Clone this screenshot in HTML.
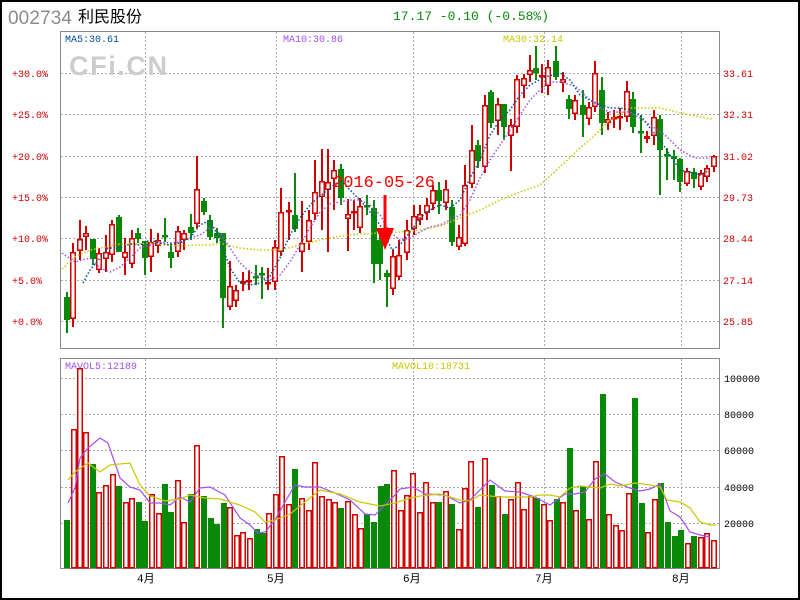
<!DOCTYPE html>
<html><head><meta charset="utf-8">
<style>
html,body{margin:0;padding:0;background:#fff;}
#wrap{position:relative;width:800px;height:600px;overflow:hidden;}
svg{position:absolute;left:0;top:0;}
text{font-family:"Liberation Mono",monospace;}
</style></head>
<body><div id="wrap">
<svg id="s" width="800" height="600" viewBox="0 0 800 600" xmlns="http://www.w3.org/2000/svg">
<rect x="1" y="1" width="798" height="598" fill="#fff" stroke="#000" stroke-width="2"/>
<text x="8" y="24" style="font-family:'Liberation Sans',sans-serif" font-size="19" fill="#8c8c8c" textLength="64">002734</text>
<text x="78" y="22" style="font-family:'Liberation Sans','Noto Sans CJK SC',sans-serif" font-size="16" fill="#000">利民股份</text>
<text x="393" y="20" font-size="13" fill="#0a8a0a">17.17 -0.10 (-0.58%)</text>
<g id="grid" stroke="#aaa" stroke-width="1" stroke-dasharray="2,2"></g>
<rect x="60.5" y="31.5" width="659" height="317" fill="none" stroke="#888"/>
<rect x="60.5" y="358.5" width="659" height="210" fill="none" stroke="#888"/>
<text x="65" y="42" font-size="10" fill="#004f9f">MA5:30.61</text>
<text x="283" y="42" font-size="10" fill="#a050f0">MA10:30.86</text>
<text x="503" y="42" font-size="10" fill="#c8c800">MA30:32.14</text>
<text x="69" y="75" style="font-family:'Liberation Sans',sans-serif" font-size="27" font-weight="bold" fill="#cccccc" textLength="98">CFi.CN</text>
<text x="65" y="369" font-size="10" fill="#a050f0">MAVOL5:12189</text>
<text x="392" y="369" font-size="10" fill="#c8c800">MAVOL10:18731</text>
<g id="lab" font-size="10" fill="#d00000"></g>
<g id="vol"></g>
<g id="cdl"></g>
<g id="lines" fill="none"></g>
<text x="333" y="187" font-size="17" fill="#ff0000" textLength="102">2016-05-26</text>
<line x1="385" y1="195" x2="385" y2="236" stroke="#ff0000" stroke-width="3"/>
<polygon points="376,228 394,228 385,250" fill="#ff0000"/>
<g font-size="11" fill="#000" style="font-family:'Liberation Sans','Noto Sans CJK SC',sans-serif">
<text x="137" y="582">4月</text><text x="267" y="582">5月</text><text x="403" y="582">6月</text><text x="535" y="582">7月</text><text x="672" y="582">8月</text>
</g>
</svg>
<script>
var NS="http://www.w3.org/2000/svg";
function el(p,t,a){var e=document.createElementNS(NS,t);for(var k in a)e.setAttribute(k,a[k]);document.getElementById(p).appendChild(e);return e;}
[73,114,156,197,238,280,321].forEach(function(y){el('grid','line',{x1:61,x2:719,y1:y+.5,y2:y+.5});});
[378,414,450,487,523].forEach(function(y){el('grid','line',{x1:61,x2:719,y1:y+.5,y2:y+.5});});
[145,276,413,544,681].forEach(function(x){el('grid','line',{x1:x+.5,x2:x+.5,y1:32,y2:348});el('grid','line',{x1:x+.5,x2:x+.5,y1:359,y2:568});});
var L=[["+30.0%",73],["+25.0%",114],["+20.0%",156],["+15.0%",197],["+10.0%",238],["+5.0%",280],["+0.0%",321]];
L.forEach(function(a){var t=el('lab','text',{x:12,y:a[1]+4});t.textContent=a[0];});
var R=[["33.61",73],["32.31",114],["31.02",156],["29.73",197],["28.44",238],["27.14",280],["25.85",321]];
R.forEach(function(a){var t=el('lab','text',{x:723,y:a[1]+4});t.textContent=a[0];});
var V=[["100000",378],["80000",414],["60000",450],["40000",487],["20000",523]];
V.forEach(function(a){var t=el('lab','text',{x:724,y:a[1]+4,fill:"#000"});t.textContent=a[0];});
var vb=[[67,520,'g'],[74,429,'r'],[80,368,'r'],[86,432,'r'],[93,464,'g'],[99,492,'r'],[106,485,'r'],[113,474,'r'],[119,486,'g'],[126,502,'r'],[132,498,'r'],[139,502,'g'],[145,521,'g'],[152,494,'r'],[159,513,'r'],[165,484,'g'],[171,512,'g'],[178,480,'r'],[184,522,'r'],[191,494,'g'],[197,445,'r'],[204,496,'g'],[211,518,'g'],[217,524,'g'],[224,503,'g'],[230,507,'r'],[237,535,'r'],[243,532,'r'],[250,538,'r'],[257,529,'g'],[263,533,'g'],[269,513,'r'],[276,494,'r'],[282,456,'r'],[289,504,'r'],[295,469,'g'],[302,498,'r'],[309,510,'r'],[315,462,'r'],[322,496,'r'],[329,499,'r'],[335,502,'r'],[341,508,'g'],[348,501,'r'],[355,514,'r'],[361,528,'r'],[367,514,'g'],[374,522,'g'],[381,486,'g'],[387,484,'g'],[394,470,'r'],[401,510,'r'],[407,495,'r'],[413,473,'r'],[420,512,'r'],[426,482,'r'],[433,502,'r'],[439,502,'g'],[446,491,'r'],[452,504,'g'],[459,529,'r'],[465,488,'r'],[471,461,'r'],[478,507,'g'],[485,458,'r'],[492,485,'g'],[498,496,'r'],[505,514,'g'],[511,499,'r'],[518,482,'r'],[524,509,'r'],[531,496,'r'],[537,498,'g'],[544,504,'r'],[550,520,'r'],[557,499,'g'],[563,502,'r'],[570,448,'g'],[576,510,'r'],[583,486,'g'],[589,519,'r'],[596,461,'r'],[603,394,'g'],[609,514,'r'],[616,525,'r'],[622,530,'r'],[629,493,'r'],[635,398,'g'],[642,503,'g'],[648,532,'r'],[655,499,'r'],[661,483,'g'],[668,522,'g'],[675,536,'g'],[681,530,'g'],[688,543,'r'],[694,536,'g'],[701,537,'r'],[707,533,'r'],[714,540,'r']];
vb.forEach(function(b){
 if(b[2]=='g') el('vol','rect',{x:b[0]-3,y:b[1],width:6,height:568-b[1],fill:'#088a08'});
 else el('vol','rect',{x:b[0]-2.25,y:b[1]+.75,width:4.5,height:567-b[1],fill:'#fff',stroke:'#d00000','stroke-width':1.5});
});
var cd=[[67,297,320,292,333,'g'],[73,252,319,243,327,'r'],[80,239,251,220,260,'r'],[86,233,237,226,250,'r'],[93,239,259,239,265,'g'],[99,253,270,248,273,'r'],[106,252,259,235,272,'r'],[112,224,255,220,262,'r'],[119,217,252,215,252,'g'],[125,252,258,238,275,'r'],[132,238,264,230,268,'r'],[138,233,239,228,243,'g'],[145,241,258,241,275,'g'],[151,242,257,229,272,'r'],[158,240,246,233,253,'r'],[165,235,237,218,242,'g'],[171,252,258,243,268,'g'],[178,231,252,226,257,'r'],[184,233,240,230,250,'r'],[191,227,233,214,240,'g'],[197,189,224,156,228,'r'],[204,201,212,198,215,'g'],[210,220,237,215,240,'g'],[217,233,238,228,243,'g'],[223,233,298,233,328,'g'],[230,286,307,261,310,'r'],[236,290,301,285,307,'r'],[243,281,283,272,291,'r'],[249,280,282,270,290,'r'],[256,276,278,265,285,'g'],[262,273,275,267,299,'g'],[268,282,284,268,290,'r'],[275,247,282,240,290,'r'],[281,212,252,188,256,'r'],[289,210,212,202,240,'r'],[295,215,229,173,232,'g'],[302,243,252,201,272,'r'],[309,220,242,210,250,'r'],[315,192,214,160,220,'r'],[322,181,197,149,230,'r'],[328,182,190,149,252,'r'],[334,170,179,160,210,'r'],[341,169,198,164,205,'g'],[348,214,219,199,251,'r'],[354,211,213,200,230,'r'],[360,206,228,198,233,'r'],[367,205,207,195,215,'g'],[374,208,264,200,283,'g'],[380,240,264,230,280,'g'],[387,273,277,270,307,'g'],[393,256,289,250,295,'r'],[399,255,277,240,280,'r'],[407,230,253,220,260,'r'],[414,216,229,205,235,'r'],[420,214,220,205,225,'r'],[427,205,213,198,220,'r'],[433,190,204,185,210,'r'],[439,190,201,182,214,'g'],[446,189,203,180,210,'r'],[452,207,242,200,246,'g'],[459,237,247,225,250,'r'],[465,185,244,165,246,'r'],[472,150,184,125,188,'r'],[478,145,161,140,168,'g'],[485,105,167,95,173,'r'],[491,92,123,90,128,'g'],[498,104,121,98,135,'r'],[504,104,127,104,140,'g'],[511,125,136,119,171,'r'],[517,79,127,75,133,'r'],[524,78,86,74,98,'r'],[530,70,75,55,82,'r'],[536,68,73,46,80,'g'],[542,75,77,64,93,'r'],[548,67,86,60,95,'r'],[556,61,77,46,80,'g'],[563,79,83,72,92,'r'],[569,99,109,95,119,'g'],[575,100,114,95,120,'r'],[583,105,115,90,137,'g'],[589,107,119,102,125,'r'],[595,73,107,61,112,'r'],[602,90,123,77,135,'g'],[608,119,123,112,130,'r'],[614,117,119,110,128,'r'],[620,116,118,108,130,'r'],[627,91,117,81,122,'r'],[633,99,127,92,133,'g'],[641,131,133,115,153,'g'],[647,136,139,131,143,'r'],[654,117,136,110,145,'r'],[660,119,150,115,195,'g'],[667,154,156,148,180,'g'],[674,156,159,150,180,'g'],[680,159,182,158,192,'g'],[687,171,184,168,186,'r'],[694,172,179,168,188,'g'],[701,173,187,170,190,'r'],[707,168,177,165,182,'r'],[714,156,167,155,172,'r']];
cd.forEach(function(c){
 var col=c[5]=='g'?'#088a08':'#d00000';
 el('cdl','line',{x1:c[0],x2:c[0],y1:c[3],y2:c[4],stroke:col,'stroke-width':2});
 var h=c[2]-c[1];
 if(h<3){el('cdl','rect',{x:c[0]-3,y:c[1],width:6,height:2.5,fill:col});return;}
 if(c[5]=='g') el('cdl','rect',{x:c[0]-3,y:c[1],width:6,height:h,fill:col});
 else el('cdl','rect',{x:c[0]-2.25,y:c[1]+.75,width:4.5,height:h-1.5,fill:'#fff',stroke:col,'stroke-width':1.5});
});
function pl(pts,col,dash,w){el('lines','polyline',{points:pts.map(function(p){return p.join(',')}).join(' '),stroke:col,'stroke-width':w||1.5,'stroke-dasharray':dash||''});}
pl([[62,269],[75,257],[90,250],[100,248],[120,244],[135,244],[150,243],[165,245],[180,246],[195,245],[210,245],[220,243],[230,246],[240,248],[260,250],[280,250],[300,245],[320,240],[340,236],[360,234],[380,233],[400,232],[420,230],[440,226],[460,218],[480,210],[500,200],[520,192],[540,185],[560,167],[580,148],[593,137],[610,120],[630,108],[660,108],[690,115],[712,119]],'#c8c800','1.5,2');
pl([[62,253],[75,262],[90,258],[100,268],[110,272],[120,267],[130,258],[140,248],[150,245],[160,242],[170,243],[180,242],[190,238],[200,235],[210,228],[220,233],[230,248],[240,263],[250,272],[260,277],[270,280],[280,275],[290,262],[300,245],[310,228],[320,212],[330,204],[340,202],[350,200],[360,200],[370,205],[380,215],[390,232],[400,240],[410,238],[420,232],[430,227],[440,225],[450,220],[460,215],[470,200],[480,178],[490,160],[500,145],[510,130],[520,115],[530,100],[540,90],[550,82],[560,82],[575,86],[590,100],[600,108],[610,112],[620,112],[630,112],[640,118],[650,125],[665,135],[680,150],[695,158],[710,158]],'#a050f0','1.5,2');
pl([[83,283],[90,270],[100,258],[108,248],[120,248],[130,244],[140,245],[150,240],[160,243],[170,245],[180,243],[190,238],[200,225],[210,220],[220,240],[230,268],[240,283],[250,285],[260,283],[270,276],[280,258],[290,235],[300,218],[310,205],[320,196],[330,188],[340,180],[350,190],[360,200],[370,212],[380,225],[385,235],[392,250],[400,245],[410,232],[420,218],[430,210],[440,205],[450,208],[460,200],[470,178],[480,160],[490,135],[500,120],[510,110],[520,95],[530,85],[545,77],[560,73],[570,80],[580,95],[590,100],[600,105],[610,108],[620,108],[630,110],[640,115],[650,128],[660,140],[670,155],[680,170],[690,172],[700,175],[710,170]],'#004f9f','1.5,2');
pl([[68,503],[75,488],[80,458],[88,448],[100,438],[108,443],[120,478],[130,487],[140,490],[150,503],[160,503],[170,505],[180,497],[190,502],[200,488],[210,487],[225,495],[240,518],[250,525],[258,533],[265,532],[275,520],[285,502],[295,485],[305,487],[320,487],[335,493],[350,500],[365,514],[375,515],[385,505],[395,495],[400,489],[413,487],[425,494],[445,495],[460,503],[470,500],[490,480],[505,491],[520,492],[535,497],[550,505],[565,494],[575,494],[585,492],[595,479],[605,474],[615,482],[630,488],[640,491],[650,489],[660,484],[670,511],[680,517],[690,532],[700,535],[710,537]],'#a050f0','',1.2);
pl([[68,480],[75,472],[88,463],[100,472],[110,465],[130,463],[140,485],[150,496],[165,501],[180,499],[190,495],[205,498],[220,499],[240,505],[255,512],[265,522],[275,520],[290,514],[305,502],[320,490],[340,494],[360,502],[380,506],[395,503],[410,498],[420,496],[440,494],[460,500],[470,501],[480,495],[490,496],[500,497],[515,497],[530,497],[540,495],[550,495],[560,497],[570,488],[580,486],[600,488],[610,484],[620,486],[635,483],[650,485],[660,487],[667,500],[680,502],[690,508],[700,522],[710,525],[716,525]],'#c8c800','',1.2);
</script>
</div></body></html>
